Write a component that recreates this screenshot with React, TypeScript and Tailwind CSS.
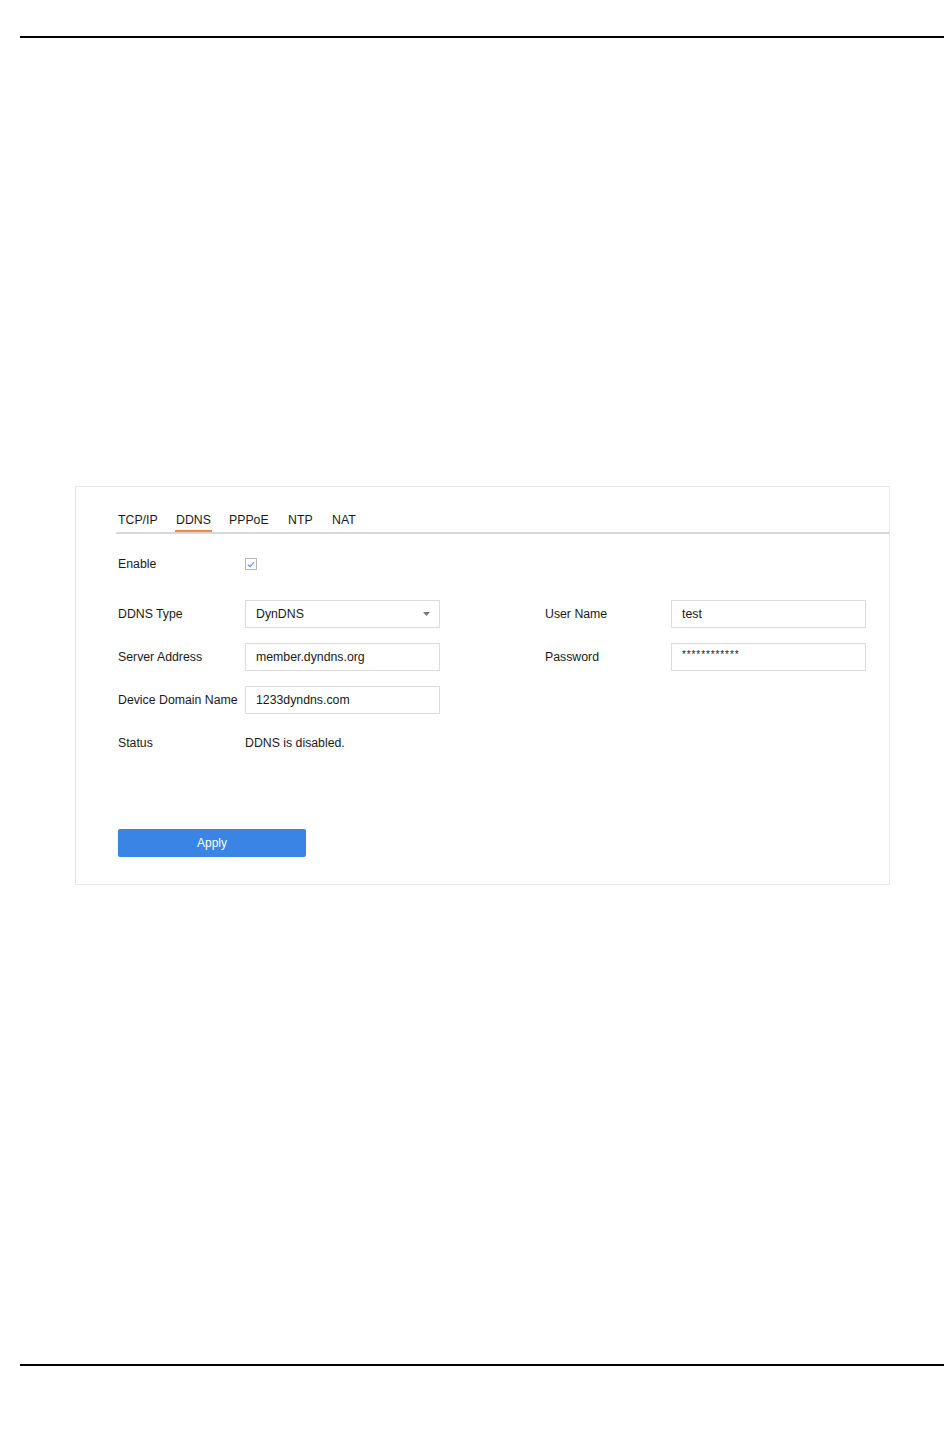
import React from 'react';

const tabs = [
  { label: 'TCP/IP', slot: 'w-[58px]' },
  { label: 'DDNS', slot: 'w-[53px]' },
  { label: 'PPPoE', slot: 'w-[59px]' },
  { label: 'NTP', slot: 'w-[44px]' },
  { label: 'NAT', slot: 'w-[40px]' },
];

// Bordered text box used for all the inputs
const Field = ({ value, small }: { value: string; small?: boolean }) => (
  <div className="w-[195px] h-[28px] border border-[#dcdcdc] bg-white flex items-center pl-[10px]">
    <span className={small ? 'text-[10px] tracking-[0.9px] -mt-[5px]' : ''}>{value}</span>
  </div>
);

const Select = ({ value }: { value: string }) => (
  <div className="w-[195px] h-[28px] border border-[#dcdcdc] bg-white flex items-center justify-between pl-[10px] pr-[9px]">
    <span>{value}</span>
    <svg width="7" height="4" viewBox="0 0 7 4">
      <path d="M0 0 L7 0 L3.5 4 Z" fill="#777" />
    </svg>
  </div>
);

const Checkbox = () => (
  <div className="w-[12px] h-[12px] border border-[#b5b5b5] bg-white flex items-center justify-center">
    <svg width="8" height="7" viewBox="0 0 8 7">
      <path d="M0.8 3.6 L3 5.6 L7.2 1" fill="none" stroke="#4a8fe7" strokeWidth="1.1" />
    </svg>
  </div>
);

const Label = ({ children }: { children: React.ReactNode }) => (
  <div className="w-[127px] shrink-0">{children}</div>
);

export default function App() {
  return (
    <div className="w-[950px] h-[1434px] bg-white text-[#1a1a1a] text-[12.3px] leading-[16px] font-['Liberation_Sans',Arial,sans-serif]">
      <div className="pt-[36px]">
        <div className="ml-[20px] w-[924px] h-[2px] bg-black" />
      </div>

      <div className="mt-[448px] ml-[75px] w-[815px] h-[399px] border border-[#e8e8e8] pt-[25px]">
        {/* tab bar */}
        <div className="ml-[40px] pl-[1px] flex border-b-2 border-[#d8d8d8]">
          {tabs.map((t) => (
            <div key={t.label} className={t.slot}>
              <span
                className={
                  'inline-block px-[1px] pb-[2px] border-b-2 ' +
                  (t.label === 'DDNS' ? 'border-[#f0884a]' : 'border-transparent')
                }
              >
                {t.label}
              </span>
            </div>
          ))}
        </div>

        <div className="pl-[42px] mt-[16px]">
          <div className="flex h-[28px] items-center">
            <Label>Enable</Label>
            <Checkbox />
          </div>

          <div className="mt-[22px] flex flex-col gap-[15px]">
            <div className="flex h-[28px] items-center">
              <Label>DDNS Type</Label>
              <Select value="DynDNS" />
              <div className="w-[105px]" />
              <div className="w-[126px]">User Name</div>
              <Field value="test" />
            </div>
            <div className="flex h-[28px] items-center">
              <Label>Server Address</Label>
              <Field value="member.dyndns.org" />
              <div className="w-[105px]" />
              <div className="w-[126px]">Password</div>
              <Field value="************" small />
            </div>
            <div className="flex h-[28px] items-center">
              <Label>Device Domain Name</Label>
              <Field value="1233dyndns.com" />
            </div>
            <div className="flex h-[28px] items-center">
              <Label>Status</Label>
              <span>DDNS is disabled.</span>
            </div>
          </div>

          <button className="mt-[72px] w-[188px] h-[28px] bg-[#3a84e6] rounded-[2px] text-white text-[12px] flex items-center justify-center">
            Apply
          </button>
        </div>
      </div>

      <div className="mt-[479px] ml-[20px] w-[924px] h-[2px] bg-black" />
    </div>
  );
}
